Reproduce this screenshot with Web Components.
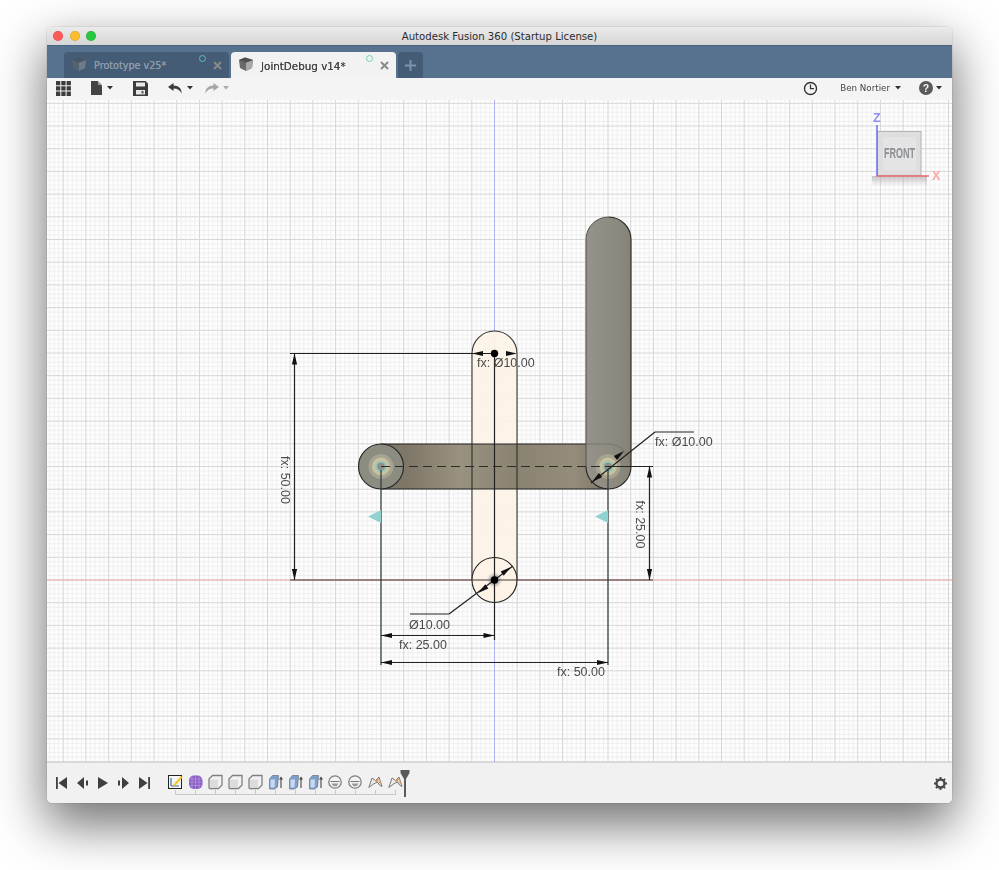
<!DOCTYPE html>
<html><head><meta charset="utf-8"><title>Autodesk Fusion 360</title>
<style>html,body{margin:0;background:#fff}body{width:999px;height:870px;overflow:hidden;font-family:"DejaVu Sans","Liberation Sans",sans-serif}</style>
</head><body>
<fusion-app>
  <fusion-titlebar>Autodesk Fusion 360 (Startup License)</fusion-titlebar>
  <fusion-tabs>
    <fusion-tab>Prototype v25*</fusion-tab>
    <fusion-tab active>JointDebug v14*</fusion-tab>
  </fusion-tabs>
  <fusion-toolbar></fusion-toolbar>
  <fusion-viewport></fusion-viewport>
  <fusion-timeline></fusion-timeline>
</fusion-app>
<script>
function el(name, html){
  customElements.define(name, class extends HTMLElement{
    constructor(){super();this.attachShadow({mode:'open'}).innerHTML=html;}
  });
}
el('fusion-app',`<style>
:host{display:block;padding:27px 47px 0}
.win{width:905px;height:776px;display:flex;flex-direction:column;border-radius:5px;overflow:hidden;filter:blur(.3px)}
.shadow{border-radius:5px;box-shadow:0 20px 50px 2px rgba(0,0,0,.56),0 0 0 1px rgba(0,0,0,.06)}
</style><div class="shadow"><div class="win"><slot></slot></div></div>`);

el('fusion-titlebar',`<style>
:host{display:flex;flex:none;height:18px;align-items:center;position:relative;justify-content:center;background:linear-gradient(#ebebeb,#d6d6d6);color:#2c2c2c;font-size:10.15px}
.l{position:absolute;left:6px;top:3.5px;display:flex;gap:6.5px}
i{display:block;width:10px;height:10px;border-radius:50%;box-shadow:inset 0 0 0 .5px rgba(0,0,0,.15)}
</style><div class="l"><i style="background:#fc5b57"></i><i style="background:#fdbc2e"></i><i style="background:#27c83f"></i></div><slot></slot>`);

el('fusion-tabs',`<style>
:host{display:flex;flex:none;height:33px;box-sizing:border-box;padding:7px 0 0 17px;gap:2px;background:#56728f;box-shadow:inset 0 1px 0 #4a6580}
.plus{width:25px;height:26px;background:#445c75;border-radius:4px 4px 0 0;display:flex;align-items:center;justify-content:center}
</style><slot></slot><div class="plus"><svg width="11" height="11" viewBox="0 0 11 11"><path d="M5.500 0v11M0 5.500h11" stroke="#7f93a8" stroke-width="2"/></svg></div>`);

el('fusion-tab',`<style>
:host{display:flex;width:165px;height:26px;box-sizing:border-box;padding-left:8px;align-items:center;background:#445c75;color:#8e9cab;font-size:9.65px;border-radius:4px 4px 0 0;position:relative}
:host([active]){background:#f2f2f2;color:#444;font-size:10.35px}
svg.c{flex:none;margin-right:8px;margin-top:-3px}
:host(:not([active])) svg.c{opacity:.42}
svg.x{position:absolute;right:7px;top:9px}
.r{position:absolute;right:23px;top:3px;width:5px;height:5px;border-radius:50%;border:1px solid #5cbfae}
:host([active]) .r{border-color:#72ccbb}
label{text-shadow:0 0 .4px currentColor;margin-top:1px}
</style><svg class="c" width="14" height="14" viewBox="0 0 14 14"><path d="M0 3l6-2.500 8 2.500-1 8-6 3-6-3z" fill="#6a6a6a"/><path d="M7 5.500l7-2.500-1 8-6 3z" fill="#a8a8a8"/><path d="M0 3l7 2.500 7-2.500-8-2.500z" fill="#4f4f4f"/></svg><label><slot></slot></label><span class="r"></span><svg class="x" width="9" height="9" viewBox="0 0 9 9"><path d="M1 1l7 7M8 1l-7 7" stroke="#8a8a8a" stroke-width="2"/></svg>`);

const caret=(c='#333')=>`<svg class="caret" width="6" height="4" viewBox="0 0 6 4"><path d="M0 0h6L3 3.500z" fill="${c}"/></svg>`;
el('fusion-toolbar',`<style>
:host{display:flex;flex:none;height:22px;box-sizing:border-box;align-items:center;background:#f4f4f4;padding:0 0 2px 9px;color:#444;font-size:8.7px}
.g{display:flex;align-items:center;gap:3px}
.caret{flex:none}
.sp{flex:1}
svg{display:block}
</style>
<svg width="15" height="15" viewBox="0 0 15 15" fill="#3c3c3c"><path d="M0 0h4.300v4.300H0zM5.300 0h4.300v4.300H5.300zM10.600 0h4.300v4.300h-4.300zM0 5.300h4.300v4.300H0zM5.300 5.300h4.300v4.300H5.300zM10.600 5.300h4.300v4.300h-4.300zM0 10.600h4.300v4.300H0zM5.300 10.600h4.300v4.300H5.300zM10.600 10.600h4.300v4.300h-4.300z"/></svg>
<div class="g" style="margin-left:20px;gap:5px"><svg width="11" height="14" viewBox="0 0 11 14"><path d="M0 0h6.500L11 4.500V14H0z" fill="#444"/><path d="M7 0l4 4H7z" fill="#999"/></svg>${caret()}</div>
<svg style="margin-left:20px" width="15" height="15" viewBox="0 0 15 15"><path d="M0 0h12.500L15 2.500V15H0z" fill="#3c3c3c"/><path d="M3 1.500h9v4H3z" fill="#e8e8e8"/><path d="M3 9h9v4.500H3z" fill="#e8e8e8"/><path d="M8.500 10h2v2.500h-2z" fill="#555"/></svg>
<div class="g" style="margin-left:20px;gap:4px"><svg width="15" height="11" viewBox="0 0 15 11"><path d="M5.500 0L0 4l5.500 4V5.500c4 0 6.500 1.500 8 5 .5-5-3-8-8-8z" fill="#3c3c3c"/></svg>${caret()}</div>
<div class="g" style="margin-left:11px;gap:4px"><svg width="15" height="11" viewBox="0 0 15 11"><path d="M9.500 0L15 4l-5.500 4V5.500c-4 0-6.500 1.500-8 5-.5-5 3-8 8-8z" fill="#a6a6a6"/></svg>${caret('#aaa')}</div>
<div class="sp"></div>
<svg width="15" height="15" viewBox="0 0 15 15"><circle cx="7.500" cy="7.500" r="6" fill="none" stroke="#333" stroke-width="1.400"/><path d="M7.500 3.500v4.200h3.500" fill="none" stroke="#333" stroke-width="1.300"/></svg>
<div class="g" style="margin-left:22px;gap:5px"><span>Ben Nortier</span>${caret()}</div>
<svg style="margin-left:18px" width="14" height="14" viewBox="0 0 14 14"><circle cx="7" cy="7" r="7" fill="#5a5a5a"/><text x="7" y="10.800" font-size="10.500" font-weight="700" fill="#f4f4f4" text-anchor="middle" font-family="Liberation Sans">?</text></svg>
<div class="g" style="margin:0 10px 0 3px">${caret()}</div>`);

const d='#222';
let minor='',major='';
for(let i=-100;i<=100;i++){
  const x=494.5+i*4.54;
  if(x>=47&&x<=952){ if(i%5===0) major+=`M${x.toFixed(2)} 100V762`; else minor+=`M${x.toFixed(2)} 100V762`; }
}
for(let i=-110;i<=50;i++){
  const y=580+i*4.54;
  if(y>=100&&y<=762){ if(i%5===0) major+=`M47 ${y.toFixed(2)}H952`; else minor+=`M47 ${y.toFixed(2)}H952`; }
}
const arrow=(x,y,deg)=>`<path transform="translate(${x} ${y}) rotate(${deg})" d="M0 0L-11 -2.600V2.600z" fill="#111"/>`;
const txt=(x,y,s,extra='')=>`<text x="${x}" y="${y}" font-size="12.500" fill="#4a4a4a" font-family="Liberation Sans" ${extra}>${s}</text>`;
const hub=(x,y)=>`<circle cx="${x}" cy="${y}" r="12.500" fill="#a6a391"/><circle cx="${x}" cy="${y}" r="9" fill="#c8c29f"/><circle cx="${x}" cy="${y}" r="5.500" fill="#8cc6bd"/><circle cx="${x}" cy="${y}" r="3.800" fill="#8f8e87"/>`;
el('fusion-viewport',`<style>
:host{display:block;flex:none;height:662px;background:#fff}
svg{display:block}
</style>
<svg width="905" height="662" viewBox="47 100 905 662">
<defs>
<linearGradient id="hl" x1="0" x2="1" y1="0" y2="0"><stop offset="0" stop-color="#7a7566"/><stop offset=".12" stop-color="#7f7868"/><stop offset=".35" stop-color="#9a9281"/><stop offset=".6" stop-color="#8b8372"/><stop offset=".85" stop-color="#958d7c"/><stop offset="1" stop-color="#7c7565"/></linearGradient>
<linearGradient id="vl" x1="0" x2="1" y1="0" y2="0"><stop offset="0" stop-color="#94928a"/><stop offset=".5" stop-color="#8f8d81"/><stop offset="1" stop-color="#858378"/></linearGradient>
<radialGradient id="halo"><stop offset=".3" stop-color="#777"/><stop offset="1" stop-color="#fff" stop-opacity="0"/></radialGradient>
<linearGradient id="cs" x1="0" x2="0" y1="0" y2="1"><stop offset="0" stop-color="#999" stop-opacity=".55"/><stop offset="1" stop-color="#999" stop-opacity="0"/></linearGradient>
</defs>
<rect x="47" y="100" width="905" height="662" fill="#fdfdfd"/>
<path d="${minor}" stroke="#eeeeee" stroke-width=".9" fill="none"/>
<path d="${major}" stroke="#d6d6d6" stroke-width="1" fill="none"/>
<path d="M47 580H952" stroke="#f2a8a8"/>
<path d="M494.500 100V762" stroke="#aeb0f0"/>

<path d="M472 353.500a22.500 22.500 0 0 1 45 0V580a22.500 22.500 0 0 1-45 0z" fill="#fdf3e7" fill-opacity=".93"/>
<rect x="381" y="444" width="227" height="45" fill="url(#hl)"/>
<path d="M381 444H608M381 489H608" stroke="${d}" stroke-width="1.200"/>
<path d="M472 353.500a22.500 22.500 0 0 1 45 0V580M472 353.500V580" fill="none" stroke="${d}" stroke-width="1.100" stroke-opacity=".9"/>
<circle cx="494.500" cy="580" r="22.500" fill="#fdf3e7" stroke="${d}" stroke-width="1.100"/>
<circle cx="494.500" cy="580" r="9" fill="url(#halo)"/>
<circle cx="381" cy="466.500" r="22.500" fill="#8d8c81" stroke="${d}" stroke-width="1.100"/>
<path d="M586 466.500V239.500a22.500 22.500 0 0 1 45 0V466.500a22.500 22.500 0 0 1-22.500 22.500a22.500 22.500 0 0 1-22.500-22.500" fill="url(#vl)"/>
<path d="M586 444H608a22.500 22.500 0 0 1 22.500 22.500" fill="none" stroke="#78766b"/>
<path d="M586 466.500V239.500a22.500 22.500 0 0 1 22.500-22.500" fill="none" stroke="#55534c"/>
<path d="M608.500 217a22.500 22.500 0 0 1 22.500 22.500V466.500a22.500 22.500 0 0 1-22.500 22.500a22.500 22.500 0 0 1-22.500-22.500" fill="none" stroke="${d}" stroke-width="1.100"/>
${hub(381,466.500)}${hub(608,466.500)}

<g stroke-width="1.200">
<path d="M290 353.500H494.500M294.500 353.500V580" stroke="${d}" fill="none"/>
<path d="M290 580H653" stroke="#47383a"/>
<path d="M494.500 353.500V640" stroke="${d}"/>
<path d="M381 466.500H608" stroke="#2b2b2b" stroke-dasharray="9 5"/>
<path d="M608 466.500H653M649.500 466.500V580" stroke="${d}"/>
<path d="M381 470V665M608 470V665" stroke="#2c3a3c"/>
<path d="M381 635.500H494.500M381 662.500H608" stroke="${d}"/>
<path d="M449 614H410M449 614L513 566M655 432H694M655 432L591 483" stroke="${d}" fill="none"/>
</g>
${arrow(294.500,353.500,-90)}${arrow(294.500,580,90)}
${arrow(649.500,466.500,-90)}${arrow(649.500,580,90)}
${arrow(472,353.500,180)}${arrow(517,353.500,0)}
${arrow(381,635.500,180)}${arrow(494.500,635.500,0)}
${arrow(381,662.500,180)}${arrow(608,662.500,0)}
${arrow(478,593,143.500)}${arrow(511,567,-36.500)}
${arrow(592,482,141)}${arrow(624,451,-39)}
<circle cx="494.500" cy="353.500" r="3.700" fill="#000"/><circle cx="494.500" cy="580" r="3.700" fill="#000"/>
<path d="M381 510v13l-13-6.500zM608 510v13l-13-6.500z" fill="#8fd2d0"/>

${txt(477,367,'fx: Ø10.00')}
${txt(655,446,'fx: Ø10.00')}
${txt(409,629,'Ø10.00')}
${txt(399,649,'fx: 25.00')}
${txt(557,676,'fx: 50.00')}
${txt(0,0,'fx: 50.00','transform="translate(280.500 456) rotate(90)"')}
${txt(0,0,'fx: 25.00','transform="translate(635.500 500.500) rotate(90)"')}

<rect x="872" y="176" width="55" height="10" fill="url(#cs)"/>
<rect x="877.500" y="131.500" width="43.500" height="44" fill="#dedede" stroke="#b4b4b4"/>
<rect x="883" y="137" width="33" height="33" fill="#e4e4e4"/>
<text x="884" y="158" font-size="14" font-weight="700" fill="#8a8e93" font-family="Liberation Sans" textLength="31" lengthAdjust="spacingAndGlyphs">FRONT</text>
<path d="M877 125V176" stroke="#6f6ff0" stroke-width="1.500"/><path d="M876.500 176H929" stroke="#ef6a70" stroke-width="1.500"/>
<text x="873" y="122" font-size="12.500" font-weight="700" fill="#8f8ff5" font-family="Liberation Sans">Z</text>
<text x="932" y="180" font-size="12.500" font-weight="700" fill="#ffa6a6" font-family="Liberation Sans">X</text>
</svg>`);

const cell=s=>`<svg width="20" height="16" viewBox="0 0 20 16">${s}</svg>`;
const box=cell(`<path d="M1 5l3.500-3.500H14v9.500l-3.500 3.500H2.300q-1.300 0-1.300-1.300z" fill="#f2f2f2" stroke="#808080" stroke-width="1.300"/><path d="M2 5.500h8v8H2z" fill="#dcdcdc"/>`);
const ext=cell(`<path d="M1.500 5l3-3.500h6l-1 11.500-3 2h-5z" fill="#7e9fcc" stroke="#6d7a8c" stroke-width=".8"/><path d="M2.500 5.500h4.500l-.5 8h-4z" fill="#c8d8ee"/><path d="M13 14V4" stroke="#444" stroke-width="1.100"/><path d="M11 5.500l2-3 2 3z" fill="#444"/>`);
const cir=cell(`<circle cx="7" cy="8" r="6.200" fill="#f2f2f2" stroke="#808080" stroke-width="1.300"/><path d="M2.500 7.500h9" stroke="#777"/><path d="M3.500 9.500h7q-1 2.800-3.500 2.800T3.500 9.500z" fill="#999"/>`);
const arc=cell(`<path d="M.8 13.500L4 4l3.500 2.500L11 3l3 9.500-2.500-1.500-2-3-2 1-2 1z" fill="#eaeaea" stroke="#6e6e6e" stroke-width=".9"/><path d="M7.500 6.500L11 4l-1 4-2.500 0zM10.500 8l2-1 .5 3.500z" fill="#e39a55"/>`);
el('fusion-timeline',`<style>
:host{display:flex;flex:none;height:41px;box-sizing:border-box;background:#f1f1f1;border-top:1px solid #d8d8d8;padding:12px 5px 0 9px;position:relative;align-items:flex-start}
svg{display:block}
.p{display:flex;gap:10px;margin-top:2px}
.col{margin-left:18px;margin-top:-1px;position:relative}
.row{display:flex}
.ruler{display:flex;margin:0 0 0 7px;width:221px;height:5px;box-sizing:border-box;border-bottom:1px solid #c8c8c8;justify-content:space-between}
.ruler i{width:1px;background:#c8c8c8;height:4px}
.mark{position:absolute;left:353px;top:7px}
.sp{flex:1}
</style>
<div class="p">
<svg width="11" height="12" viewBox="0 0 11 12"><path d="M0 0h1.800v12H0zM11 0v12L2.500 6z" fill="#3f3f3f"/></svg>
<svg width="11" height="12" viewBox="0 0 11 12"><path d="M7 0v12L0 6zM9 3.500h2v5H9z" fill="#3f3f3f"/></svg>
<svg width="10" height="12" viewBox="0 0 10 12"><path d="M0 0l10 6-10 6z" fill="#3f3f3f"/></svg>
<svg width="11" height="12" viewBox="0 0 11 12"><path d="M4 0v12l7-6zM0 3.500h2v5H0z" fill="#3f3f3f"/></svg>
<svg width="11" height="12" viewBox="0 0 11 12"><path d="M11 0H9.200v12H11zM0 0v12l8.500-6z" fill="#3f3f3f"/></svg>
</div>
<div class="col">
<div class="row">
${cell(`<rect x=".5" y="1.500" width="13" height="13" fill="#f4f4f4" stroke="#222"/><path d="M3 12V4M3 12h8" stroke="#3d6fa8" stroke-width="1.200"/><path d="M5 11l8-9 1.500 1.500L7 12z" fill="#f3c623"/>`)}
${cell(`<rect x="1" y="1.500" width="13.500" height="13.500" rx="5" fill="#8a5fc4"/><path d="M4 2v13M7.500 2v13M11 2v13M1 5h13M1 8h13M1 11.500h13" stroke="#b99ae0" stroke-width=".7"/>`)}
${box}${box}${box}${ext}${ext}${ext}${cir}${cir}${arc}${arc}
</div>
<div class="ruler">${'<i></i>'.repeat(12)}</div>
</div>
<svg class="mark" width="10" height="28" viewBox="0 0 10 28"><path d="M.5 0h9v3L6 9v18H4V9L.5 3z" fill="#5a5a5a"/></svg>
<div class="sp"></div>
<svg style="margin:2px 0 0" width="13" height="13" viewBox="0 0 14 14"><circle cx="7" cy="7" r="4.300" fill="none" stroke="#4a4a4a" stroke-width="2.600"/><path d="M7 0v3M7 11v3M0 7h3M11 7h3M2 2l2 2M10 10l2 2M12 2l-2 2M4 10l-2 2" stroke="#4a4a4a" stroke-width="2"/></svg>`);
</script>
</body></html>
